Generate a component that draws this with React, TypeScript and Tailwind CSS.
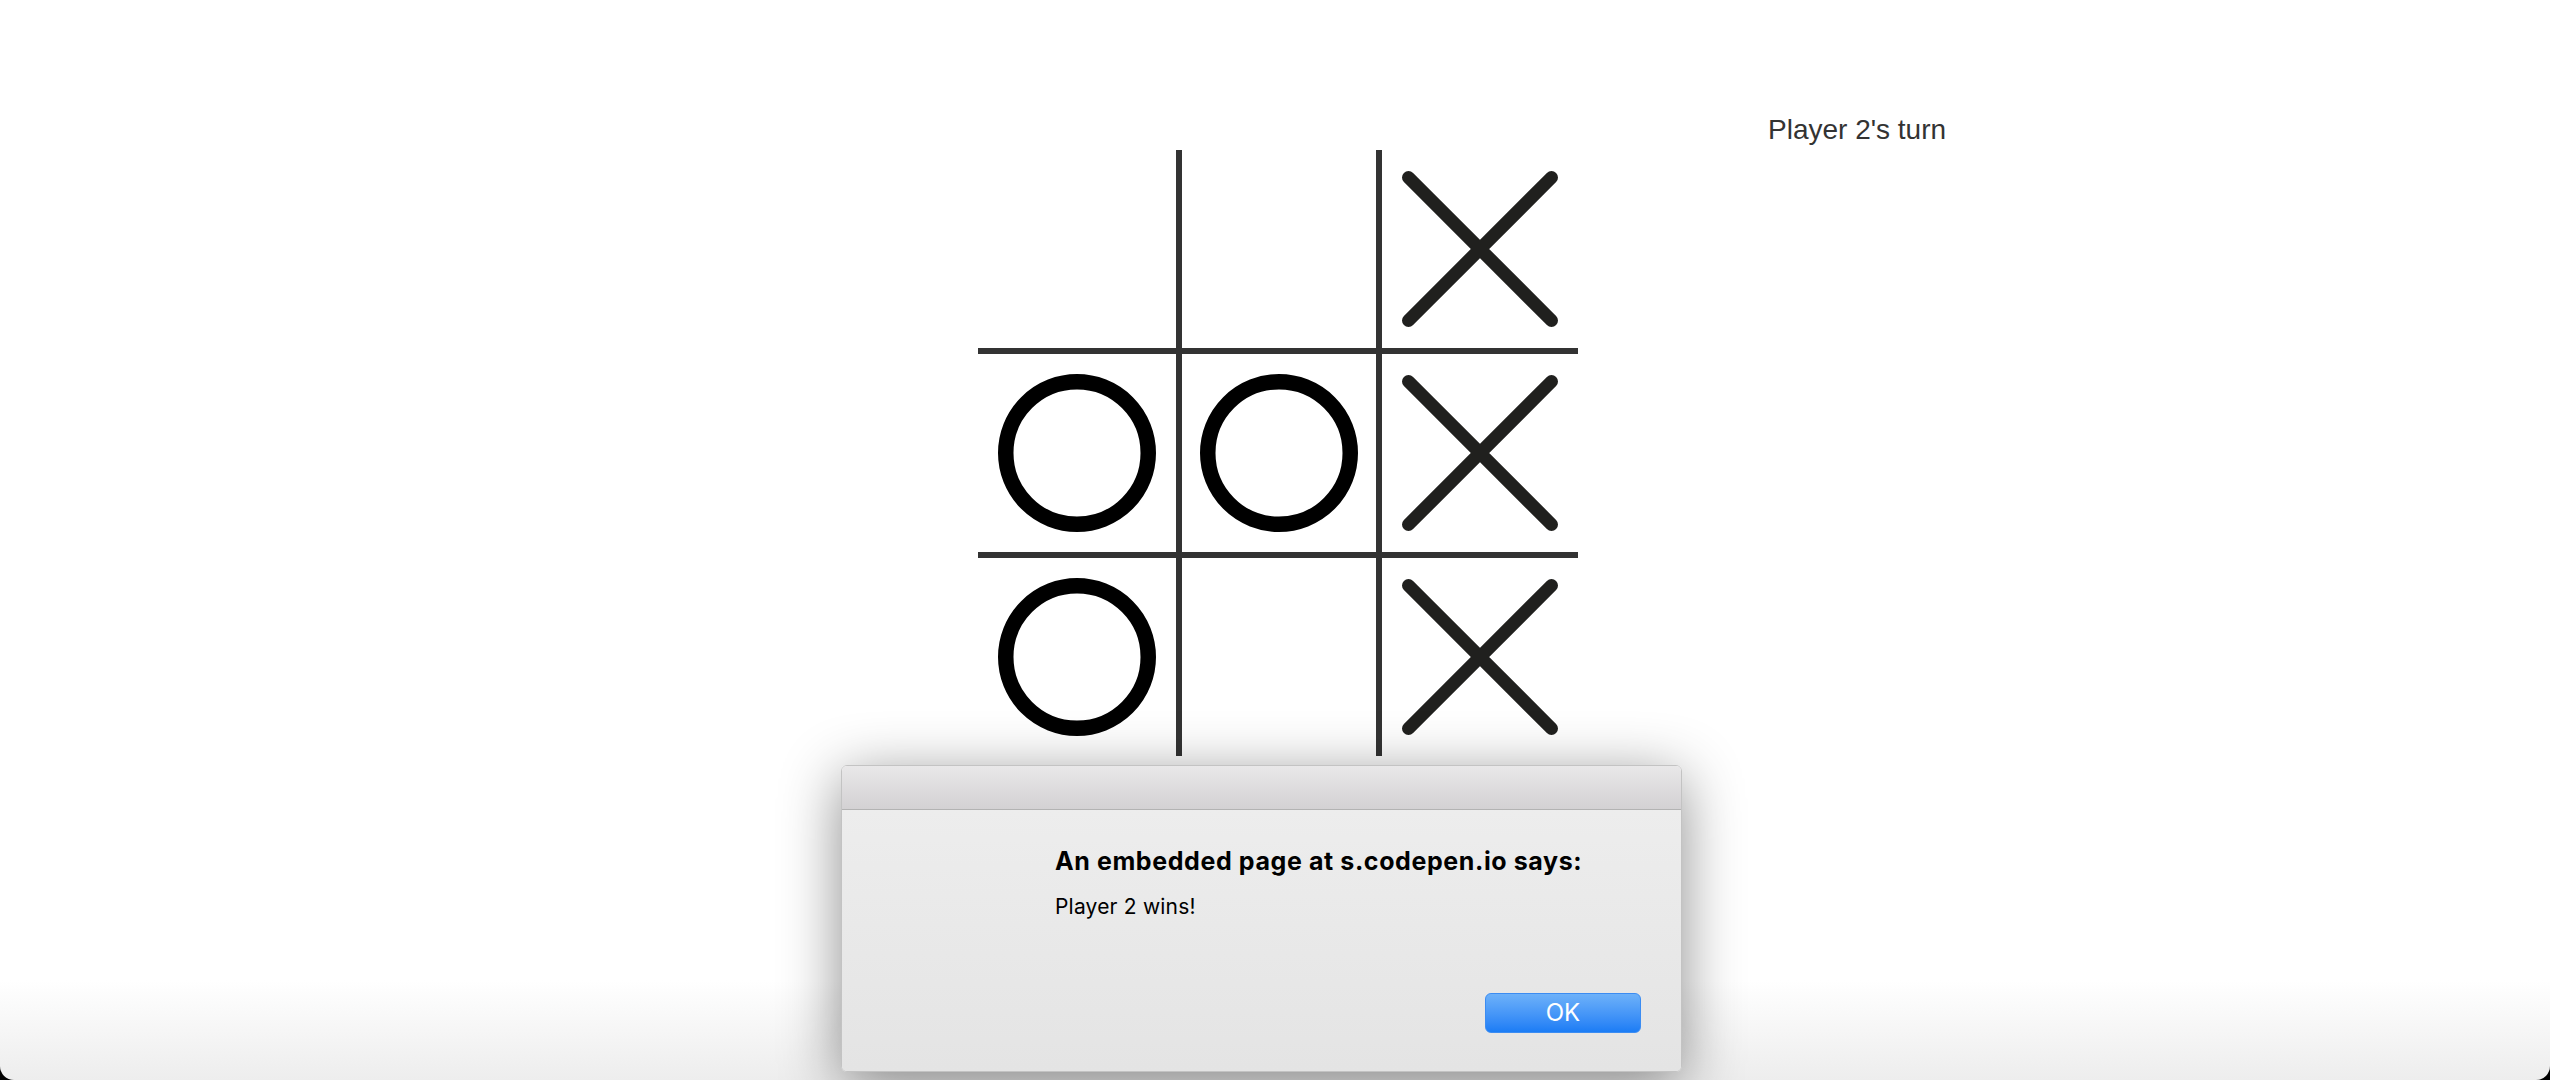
import clsx from "clsx";

const cells = ["", "", "x", "o", "o", "x", "o", "", "x"];

function Cross() {
  return (
    <svg width="160" height="160" viewBox="0 0 160 160">
      <path
        d="M8.5 8.5 L151.5 151.5 M151.5 8.5 L8.5 151.5"
        stroke="#20201e"
        strokeWidth="13"
        strokeLinecap="round"
        fill="none"
      />
    </svg>
  );
}

function Nought() {
  return (
    <svg width="160" height="160" viewBox="0 0 160 160">
      <circle cx="80" cy="80" r="71.25" stroke="#000" strokeWidth="15.5" fill="none" />
    </svg>
  );
}

function Board() {
  return (
    <div className="grid w-[600px] grid-cols-[204px_200px_196px] grid-rows-[204px_204px_198px]">
      {cells.map((c, i) => (
        <div
          key={i}
          className={clsx(
            "flex items-center justify-center border-[#333]",
            i % 3 < 2 && "border-r-[6px]",
            i < 6 && "border-b-[6px]"
          )}
        >
          {c === "x" && <Cross />}
          {c === "o" && <Nought />}
        </div>
      ))}
    </div>
  );
}

function AlertDialog() {
  return (
    <div className="absolute left-[841px] top-[765px] flex h-[307px] w-[841px] flex-col overflow-hidden rounded-[6px] border border-[#c3c3c3] shadow-[0_12px_60px_rgba(0,0,0,0.45)] font-['Inter',sans-serif]">
      <div className="h-[44px] shrink-0 border-b border-[#b3b3b3] bg-gradient-to-b from-[#e9e8e9] to-[#d3d1d3]" />
      <div className="flex flex-1 flex-col bg-gradient-to-b from-[#ededed] to-[#e4e4e4] pl-[213px] pr-[40px] pb-[38px] pt-[36px]">
        <p className="text-[25px] font-bold leading-[30px] tracking-[0.6px] text-black">
          An embedded page at s.codepen.io says:
        </p>
        <p className="mt-[18px] text-[21px] leading-[26px] tracking-[0.2px] text-black">
          Player 2 wins!
        </p>
        <button className="mt-auto flex h-[40px] w-[156px] items-center justify-center self-end rounded-[6px] border border-[#3b8cf2] bg-gradient-to-b from-[#6db1f9] to-[#1a7cf5] text-[24px] leading-none text-white">
          OK
        </button>
      </div>
    </div>
  );
}

export default function App() {
  return (
    <div className="relative h-[1080px] w-full overflow-hidden bg-white">
      <div className="absolute inset-x-0 bottom-0 h-[100px] bg-black">
        <div className="h-full rounded-b-[14px] bg-gradient-to-b from-white to-[#ededed]" />
      </div>
      <div className="relative flex items-start pl-[978px] pt-[114px]">
        <div className="mt-[36px]">
          <Board />
        </div>
        <p className="ml-[190px] font-['Liberation_Sans',Arial,sans-serif] text-[28px] leading-[32px] text-[#333]">
          Player 2's turn
        </p>
      </div>
      <AlertDialog />
    </div>
  );
}
